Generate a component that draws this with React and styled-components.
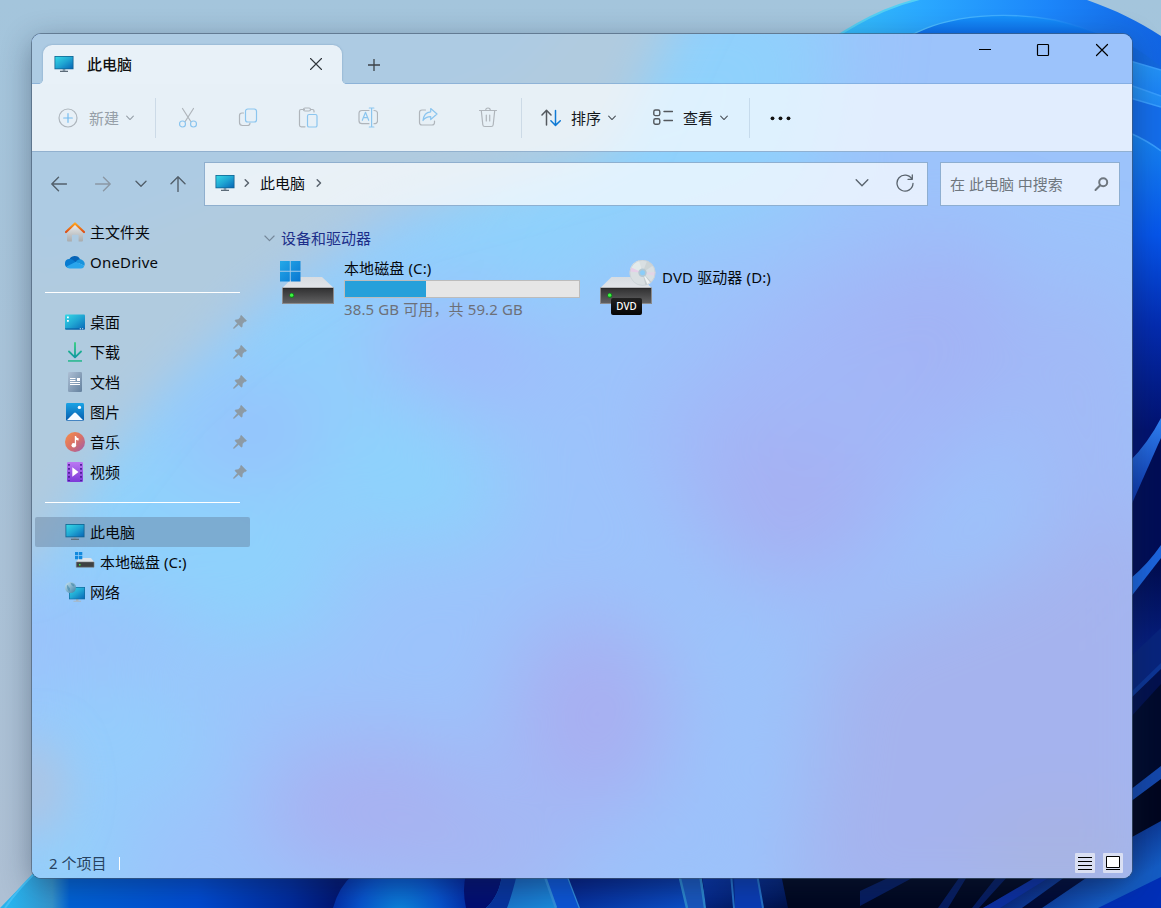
import React from "react";
import styled, { createGlobalStyle, css } from "styled-components";

const GlobalStyle = createGlobalStyle`
  * { box-sizing: border-box; }
  html, body { margin: 0; padding: 0; overflow: hidden; }
  body {
    font-family: "Noto Sans", "Noto Sans CJK SC", sans-serif;
    font-size: 15px;
    line-height: 20px;
    color: #06090d;
  }
  svg { display: block; flex: none; }
`;

const Desktop = styled.main`
  position: relative;
  width: 1161px;
  height: 908px;
  padding: 34px 29px 30px 32px;
  overflow: hidden;
  background: #a5c3d8;
`;

const WallpaperLayer = styled.div`
  position: absolute;
  inset: 0;
`;

const Window = styled.section`
  position: relative;
  display: flex;
  flex-direction: column;
  width: 1100px;
  height: 844px;
  border-radius: 9px;
  overflow: hidden;
  background: #9cc3fb;
`;

const Frame = styled.div`
  position: relative;
  width: 1100px;
  height: 844px;
  border-radius: 9px;
  box-shadow: 0 0 0 1px rgba(70, 90, 115, 0.62), 0 8px 30px rgba(20, 35, 60, 0.42);
`;

const Tint = styled.div`
  position: absolute;
  inset: 0;
`;

const TitleBar = styled.header`
  position: relative;
  display: flex;
  height: 50px;
  flex: none;
  padding-left: 11px;
  border-bottom: 1px solid rgba(110, 155, 205, 0.5);
`;

const Tab = styled.div`
  position: relative;
  display: flex;
  align-items: center;
  width: 299px;
  height: 39px;
  margin-top: 11px;
  margin-bottom: -1px;
  padding: 0 19px 1px 11px;
  border-radius: 9px 9px 0 0;
  background: #e8f1f8;
  box-shadow: 0 0 2px rgba(80, 120, 160, 0.55);
  clip-path: inset(-3px -4px 0 -4px);

  &::before,
  &::after {
    content: "";
    position: absolute;
    bottom: 0;
    width: 4px;
    height: 4px;
  }
  &::before {
    left: -4px;
    background: radial-gradient(circle at 0 0, transparent 3.5px, #e8f1f8 4px);
  }
  &::after {
    right: -4px;
    background: radial-gradient(circle at 100% 0, transparent 3.5px, #e8f1f8 4px);
  }
`;

const TabTitle = styled.span`
  flex: 1;
  margin-left: 13px;
  font-weight: 500;
  color: #111;
`;

const AddTab = styled.div`
  padding: 25px 0 0 26px;
  color: #3c4248;
`;

const Controls = styled.div`
  display: flex;
  gap: 45px;
  margin-left: auto;
  padding: 9px 23px 0 0;
  color: #000;
`;

const Toolbar = styled.div`
  position: relative;
  display: flex;
  align-items: center;
  flex: none;
  height: 68px;
  background: rgba(255, 255, 255, 0.7);
  border-bottom: 1px solid rgba(90, 135, 180, 0.6);
`;

const ToolButton = styled.div`
  display: flex;
  align-items: center;
  width: ${(p) => p.$width}px;
  padding-left: ${(p) => p.$inset}px;
  color: ${(p) => (p.$muted ? "#969fa8" : "#14181c")};
`;

const ToolLabel = styled.span`
  margin: 0 7px 0 ${(p) => p.$gap}px;
  width: 30px;
  white-space: nowrap;
`;

const IconGroup = styled.div`
  display: flex;
  padding: 0 3px 0 2px;
`;

const IconSlot = styled.div`
  display: grid;
  place-items: center;
  width: 60px;
  height: 40px;
  color: #afb5bb;
`;

const Separator = styled.div`
  width: 1px;
  height: 40px;
  background: rgba(120, 150, 180, 0.24);
`;

const NavRow = styled.div`
  position: relative;
  display: flex;
  flex: none;
  height: 65px;
  padding: 10px 12px 0 0;
`;

const NavButtons = styled.div`
  display: flex;
  align-items: center;
  width: 172px;
  height: 44px;
  padding-left: 19px;
  color: #53606c;
`;

const NavIcon = styled.div`
  display: flex;
  width: ${(p) => p.$width}px;
  margin-right: ${(p) => p.$after}px;
  color: ${(p) => (p.$muted ? "#8b98a5" : "inherit")};
`;

const field = css`
  display: flex;
  align-items: center;
  height: 44px;
  border: 1px solid rgba(96, 140, 185, 0.65);
  background: rgba(255, 255, 255, 0.72);
`;

const AddressBar = styled.div`
  ${field}
  width: 724px;
  padding: 0 13px 2px 10px;
  margin-right: 12px;
  color: #5a646e;
`;

const CrumbArrow = styled.span`
  margin-left: ${(p) => p.$before}px;
`;

const Crumb = styled.span`
  margin-left: 10px;
  color: #0b0e12;
`;

const AddressActions = styled.div`
  display: flex;
  align-items: center;
  gap: 27px;
  margin-left: auto;
`;

const SearchBox = styled.div`
  ${field}
  width: 180px;
  padding: 0 10px 0 9px;
  justify-content: space-between;
  color: #6f777f;
  white-space: nowrap;
`;

const Body = styled.div`
  position: relative;
  display: flex;
  flex: 1;
  min-height: 0;
`;

const Sidebar = styled.nav`
  width: 218px;
  padding-left: 3px;
`;

const Row = styled.div`
  display: flex;
  align-items: center;
  height: 30px;
  padding: 0 3px 0 ${(p) => (p.$nested ? 39 : 29)}px;
  border-radius: 2px;
  background: ${(p) => (p.$selected ? "rgba(98, 122, 150, 0.42)" : "transparent")};
`;

const RowIcon = styled.span`
  display: grid;
  place-items: center;
  width: 22px;
  height: 22px;
  margin-right: 4px;
`;

const RowLabel = styled.span`
  flex: 1;
  white-space: nowrap;
  letter-spacing: ${(p) => (p.$wide ? 0.2 : 0)}px;
`;

const Divider = styled.div`
  height: 30px;
  padding: 15px 10px 0;

  &::before {
    content: "";
    display: block;
    height: 1px;
    background: #fff;
  }
`;

const Content = styled.div`
  flex: 1;
  padding: 11px 0 0 14px;
`;

const GroupHeading = styled.div`
  display: flex;
  align-items: center;
  gap: 6px;
  height: 20px;
  color: #1d2f8a;
`;

const Drives = styled.div`
  display: flex;
  padding: 10px 0 0 16px;
`;

const Drive = styled.div`
  display: flex;
  width: ${(p) => p.$width}px;
`;

const DriveIcon = styled.div`
  width: ${(p) => p.$width}px;
  padding-top: 2px;
`;

const DriveInfo = styled.div`
  padding-top: ${(p) => p.$top}px;
  white-space: nowrap;
  letter-spacing: 0.12px;
`;

const DriveName = styled.div`
  height: 20px;
`;

const Meter = styled.div`
  width: 236px;
  height: 18px;
  margin-top: 2px;
  border: 1px solid #bcbcbc;
  background: #e6e6e6;
`;

const MeterFill = styled.div`
  height: 100%;
  background: #26a0da;
`;

const DriveSpace = styled.div`
  margin-top: 1px;
  color: #6d7078;
`;

const StatusBar = styled.footer`
  position: relative;
  display: flex;
  align-items: center;
  flex: none;
  height: 30px;
  padding: 0 9px 0 17px;
  color: #27425f;
`;

const StatusMark = styled.span`
  width: 1px;
  height: 13px;
  margin-left: 13px;
  background: #fff;
`;

const ViewButtons = styled.div`
  display: flex;
  gap: 8px;
  margin-left: auto;
`;

const ViewButton = styled.div`
  width: 20px;
  height: 20px;
  border-radius: 1px;
  background: rgba(238, 240, 246, 0.72);
`;

const Line = ({ size = 20, w, h, box, width = 1.2, children }) => (
  <svg
    width={w || size}
    height={h || size}
    viewBox={box || `0 0 ${w || size} ${h || size}`}
    fill="none"
    stroke="currentColor"
    strokeWidth={width}
    strokeLinecap="round"
    strokeLinejoin="round"
  >
    {children}
  </svg>
);

const Chevron = ({ w = 8, width = 1.1, color = "currentColor" }) => (
  <Line w={w} h={w} box="0 0 12 12" width={(width * 12) / w}>
    <path d="M1 3.3 6 8.3l5-5" stroke={color} />
  </Line>
);

const RightChevron = () => (
  <Line w={6} h={10} width={1.5}>
    <path d="m1.2 1.8 3.3 3.2-3.3 3.2" />
  </Line>
);

const Monitor = ({ w = 20, h = 18 }) => (
  <svg width={w} height={h} viewBox="0 0 20 18">
    <path d="M8.7 14h2.6v2H8.7z" fill="#8fa1b0" />
    <path d="M6 15.7h8v1.2H6z" fill="#5c6b78" />
    <path d="M.5 1h19v13.3H.5z" fill="#10618f" />
    <path d="M1.3 1.8h17.4v11.7H1.3z" fill="url(#screen)" />
  </svg>
);

const Home = () => (
  <svg width="20" height="20" viewBox="0 0 20 20">
    <path d="M2 8.5 10 1.8l8 6.7v10.1a1 1 0 0 1-1 1h-3.4v-5.8a1 1 0 0 0-1-1H7.9a1 1 0 0 0-1 1v5.8H3a1 1 0 0 1-1-1z" fill="url(#wall)" />
    <path d="M1 10 10 1.5 19 10" fill="none" stroke="url(#roof)" strokeWidth="2.2" strokeLinecap="round" strokeLinejoin="round" />
  </svg>
);

const Cloud = () => (
  <svg width="20" height="14" viewBox="0 0 20 14">
    <path d="M4 5.2A6 6 0 0 1 15.2 4.4L11 10 3 9z" fill="#0763b6" />
    <path d="M4.6 4.1A5 5 0 0 1 9 5.8l6 5.2-11.5 2A4.5 4.5 0 0 1 4.6 4.1z" fill="#087bd0" />
    <path d="M10.7 6.8c1.6-2.2 4-3.2 6-2.1a4.6 4.6 0 0 1 2.7 6z" fill="#1893dc" />
    <path d="M1.5 11.4 11 6.7l8.4 4a3.6 3.6 0 0 1-3.3 2.800H4.6a4 4 0 0 1-3.1-2.1z" fill="#29a5ec" />
  </svg>
);

const DesktopGlyph = () => (
  <svg width="20" height="16" viewBox="0 0 20 16">
    <rect y=".5" width="20" height="15" rx="1" fill="url(#screen)" />
    <path d="M0 14.500h20v.3q0 .7-1 .7H1q-1 0-1-.7z" fill="#07559c" />
    <path d="M2 2.500h1.800v1.800H2zM2 6h1.800v1.800H2zM14.800 14.200h1v1h-1zm2.400 0h1v1h-1z" fill="#fff" />
  </svg>
);

const Download = () => (
  <svg width="16" height="20" viewBox="0 0 16 20" fill="none" stroke="url(#green)" strokeLinecap="round" strokeLinejoin="round">
    <path d="M8.010.900 8 15M2 9.500 8 15.300l6-5.800" strokeWidth="1.800" />
    <path d="M1 18.200h14v1.500H1z" fill="#21b78b" stroke="none" />
  </svg>
);

const DocumentGlyph = () => (
  <svg width="14" height="20" viewBox="0 0 14 20">
    <rect width="14" height="20" rx="1.300" fill="url(#doc)" />
    <path d="M2 6.500h5.500M2 8.500h5.500M2 10.500h10M2 12.500h10" stroke="#fff" strokeWidth="1" />
    <path d="M9 6h3v3H9z" fill="#fff" />
  </svg>
);

const Picture = () => (
  <svg width="18" height="18" viewBox="0 0 18 18">
    <rect width="18" height="18" rx="1.400" fill="url(#photo)" />
    <path d="M.800 17.200 8 10q1-.9 2 0l7.200 7.200z" fill="#f7fbff" />
    <circle cx="13.400" cy="4.400" r="1.700" fill="#f7fbff" />
  </svg>
);

const Music = () => (
  <svg width="20" height="20" viewBox="0 0 20 20">
    <circle cx="10" cy="10" r="10" fill="url(#music)" />
    <circle cx="8.800" cy="13.300" r="2.300" fill="#fff" />
    <path d="M9.800 13.300V4h1.300c.1 1.500.9 2 2.500 2.300v2.300c-1.100-.1-2-.4-2.500-.8v5.500z" fill="#fff" />
  </svg>
);

const Video = () => (
  <svg width="16" height="20" viewBox="0 0 16 20">
    <rect width="16" height="20" rx="1.200" fill="url(#video)" />
    <path d="M2 2v17M14 2v17" stroke="#4a1d94" strokeWidth="1.800" strokeDasharray="1.800 2.200" />
    <path d="M5.300 5.300v9.400l6.200-4.700z" fill="#fff" />
  </svg>
);

const SmallDrive = () => (
  <svg width="20" height="20" viewBox="0 0 20 20">
    <path d="M4 6h12l3.500 4.500H1z" fill="#dde3e9" />
    <path d="M1.300 10h17.700v5.200H1.300z" fill="#3e4042" stroke="#77797b" strokeWidth=".6" />
    <path d="M4 12h1.500v1.500H4z" fill="#42ea45" />
    <path d="M0 0h3.300v3.300H0zm4 0h3.300v3.300H4zM0 4h3.300v3.300H0zm4 0h3.300v3.300H4z" fill="#1189dd" />
  </svg>
);

const Network = () => (
  <svg width="20" height="20" viewBox="0 0 20 20">
    <path d="M11 17h2.500v2H11zM8.500 18.800H16v.9H8.500z" fill="#a8b6c2" />
    <path d="M4 5h16v12.300H4z" fill="#126b9f" />
    <path d="M4.700 5.700h14.600v11H4.700z" fill="url(#screen)" />
    <circle cx="5.500" cy="5.500" r="5.500" fill="url(#globe)" />
    <path d="M5.500.8q3 0 4 2.500L8.500 4.500 6.500 3zM2 3q1.500 0 1.500 1.500L5 6.500 4.500 9.500Q1.500 7 2 3z" fill="#2f7ba0" opacity=".5" />
  </svg>
);

const Pin = () => (
  <svg width="14" height="14" viewBox="0 0 14 14" fill="#8d9aa4" stroke="#8d9aa4" strokeWidth=".5">
    <path d="M8.500.6 13.300 5.400q.4.700-.5 1l-1.500.4-1.900 2.100-.2 2.600q-.3 1-1.200.4L5.700 9.600 1.200 13.300.5 13.400.6 12.700 4.400 8.300 2.200 6.100q-.7-.9.4-1.200L5.200 4.600l2.100-2.100.3-1.500q.3-.9.900-.4z" />
  </svg>
);

const DriveBody = ({ x = 0, y = 0 }) => (
  <g transform={`translate(${x} ${y})`}>
    <path d="M11.500 0h28.500L52 11.300H0z" fill="url(#lid)" />
    <rect x=".5" y="11" width="51" height="15.500" fill="url(#metal)" stroke="#8b8b8d" />
    <path d="M1 11.500h50" stroke="#2a2a2b" />
    <circle cx="9.800" cy="18.500" r="2.400" fill="#0b8d18" />
    <circle cx="9.600" cy="18.200" r="1.600" fill="#40f542" />
  </g>
);

const SystemDrive = () => (
  <svg width="55" height="46" viewBox="0 0 55 46">
    <DriveBody x={2} y={17} />
    <path d="M0 1h9.800v9.800H0zm10.700 0h9.800v9.800h-9.800zM0 11.700h9.800v9.800H0zm10.700 0h9.800v9.800h-9.800z" fill="url(#win)" />
  </svg>
);

const DvdWrap = styled.div`
  position: relative;
`;

const DvdLabel = styled.span`
  position: absolute;
  left: 11px;
  top: 38px;
  width: 31px;
  height: 17px;
  border-radius: 2px;
  background: linear-gradient(#222, #050505);
  color: #fff;
  font-size: 9.8px;
  font-weight: 500;
  line-height: 17px;
  text-align: center;
`;

const DvdDrive = () => (
  <DvdWrap>
    <svg width="57" height="56" viewBox="0 0 57 56">
      <DriveBody y={17} />
      <circle cx="42.500" cy="12.800" r="12.900" fill="#d9dfe2" />
      <path d="M42.500 12.800 30 9.500A13 13 0 0 1 39 .4z" fill="#e3eaea" />
      <path d="M42.500 12.800 29.700 11.500 31.300 7.500z" fill="#e6cfe8" />
      <path d="M42.500 12.800 55.300 12 54.500 16z" fill="#e3d5e6" />
      <path d="M42.500 12.800 53 5.500A13 13 0 0 0 47 .9z" fill="#cdd4d6" />
      <path d="m42.500 12.800 3 12.500A13 13 0 0 0 51.500 22z" fill="#c3cbce" />
      <path d="m42.500 12.800 5 12A13 13 0 0 0 50.500 23z" fill="#f0f3f4" />
      <circle cx="42.500" cy="12.800" r="12.600" fill="none" stroke="#c5cdd2" strokeWidth=".7" />
      <circle cx="42.500" cy="12.800" r="4.200" fill="#b3c8d4" />
      <circle cx="42.500" cy="12.800" r="2.500" fill="#8ccdf8" />
    </svg>
    <DvdLabel>DVD</DvdLabel>
  </DvdWrap>
);

const Gradient = ({ id, from, to, mid, vertical }) => (
  <linearGradient id={id} x1="0" y1="0" x2={vertical ? 0 : 1} y2="1">
    <stop offset="0" stopColor={from} />
    {mid && <stop offset=".5" stopColor={mid} />}
    <stop offset="1" stopColor={to} />
  </linearGradient>
);

const Wallpaper = () => (
  <svg width="1161" height="908" viewBox="0 0 1161 908">
    <defs>
      <Gradient id="screen" from="#36d8e5" mid="#20a6d3" to="#0867b7" />
      <Gradient id="wall" from="#eceeef" to="#a8abad" vertical />
      <Gradient id="roof" from="#ffa21b" to="#dc4e17" vertical />
      <linearGradient id="green" x1="0" y1="0" x2="0" y2="16" gradientUnits="userSpaceOnUse">
        <stop offset="0" stopColor="#31d17c" />
        <stop offset="1" stopColor="#0d96a2" />
      </linearGradient>
      <Gradient id="doc" from="#adc0d5" to="#63809d" />
      <Gradient id="photo" from="#1aa3e5" to="#075bac" vertical />
      <Gradient id="music" from="#f69049" mid="#da7166" to="#9b5bb0" />
      <Gradient id="video" from="#ba78f2" to="#7d3ad8" vertical />
      <Gradient id="globe" from="#cbe6f2" to="#377da2" />
      <Gradient id="lid" from="#d7dce1" to="#e2e5ea" vertical />
      <Gradient id="metal" from="#303031" to="#626263" vertical />
      <Gradient id="win" from="#25a9e8" to="#0876d1" />
      <Gradient id="sky" from="#a4c5dc" to="#aec0d4" vertical />
      <linearGradient id="bloomTop" x1="830" y1="0" x2="1161" y2="40" gradientUnits="userSpaceOnUse">
        <stop offset="0" stopColor="#36c1fa" />
        <stop offset=".28" stopColor="#2aa8ff" />
        <stop offset=".65" stopColor="#1c86fa" />
        <stop offset="1" stopColor="#1265e4" />
      </linearGradient>
      <linearGradient id="inner" x1="0" y1="17" x2="0" y2="40" gradientUnits="userSpaceOnUse">
        <stop offset="0" stopColor="#1690fa" />
        <stop offset="1" stopColor="#0963e8" />
      </linearGradient>
      <linearGradient id="rim" x1="910" y1="0" x2="1100" y2="0" gradientUnits="userSpaceOnUse">
        <stop offset="0" stopColor="#50c0ff" />
        <stop offset=".6" stopColor="#3aa8ff" />
        <stop offset="1" stopColor="#1c80f5" stopOpacity="0" />
      </linearGradient>
      <Gradient id="petal" from="#2595f6" mid="#0a62f0" to="#0036c4" vertical />
      <linearGradient id="side" x1="0" y1="130" x2="0" y2="430" gradientUnits="userSpaceOnUse">
        <stop offset="0" stopColor="#1785f1" />
        <stop offset=".35" stopColor="#0655ea" />
        <stop offset=".65" stopColor="#042cb0" />
        <stop offset="1" stopColor="#021270" />
      </linearGradient>
      <linearGradient id="band" x1="0" y1="420" x2="0" y2="500" gradientUnits="userSpaceOnUse">
        <stop offset="0" stopColor="#2f7ff0" />
        <stop offset="1" stopColor="#0c36ad" />
      </linearGradient>
      <linearGradient id="deep" x1="0" y1="560" x2="0" y2="650" gradientUnits="userSpaceOnUse">
        <stop offset="0" stopColor="#010c4e" />
        <stop offset="1" stopColor="#061f80" />
      </linearGradient>
      <linearGradient id="floor" x1="0" y1="0" x2="1161" y2="0" gradientUnits="userSpaceOnUse">
        <stop offset=".01" stopColor="#28b3ed" />
        <stop offset=".045" stopColor="#3594cd" />
        <stop offset=".06" stopColor="#0062d6" />
        <stop offset=".17" stopColor="#004bd2" />
        <stop offset=".25" stopColor="#002b9d" />
        <stop offset=".29" stopColor="#001674" />
        <stop offset=".38" stopColor="#000a66" />
      </linearGradient>
      <radialGradient id="bulb" cx="400" cy="915" r="75" gradientUnits="userSpaceOnUse">
        <stop offset="0" stopColor="#0c88dc" />
        <stop offset=".55" stopColor="#0754ce" />
        <stop offset="1" stopColor="#0226a0" />
      </radialGradient>
      <Gradient id="leaf" from="#1959b6" to="#198cdd" />
      <Gradient id="ray" from="#0737b5" to="#001045" />
      <Gradient id="stem" from="#02177a" to="#0b50c8" />
      <linearGradient id="sweep" x1="1070" y1="860" x2="1100" y2="905" gradientUnits="userSpaceOnUse">
        <stop offset="0" stopColor="#0a2a80" />
        <stop offset="1" stopColor="#145cc4" />
      </linearGradient>
    </defs>
    <rect width="1161" height="908" fill="url(#sky)" />

    <path d="M828 42C870 14 900 2 934-4H1075C1110 7 1136 20 1161 36V908H1120V42z" fill="url(#bloomTop)" />
    <path d="M828 42C870 14 900 2 934-4" fill="none" stroke="#54cff4" strokeWidth="2" />
    <path d="M910 36C950 13 1010 12 1055 20Q1080 26 1104 36z" fill="url(#inner)" />
    <path d="M910 36C950 13 1010 12 1055 20Q1080 26 1104 36" fill="none" stroke="url(#rim)" strokeWidth="1.300" />
    <path d="M1124 42Q1142 51 1161 67V200h-37z" fill="#1268df" />
    <path d="M1130 61 1161 70V240h-31z" fill="url(#petal)" />
    <path d="M1130 85 1161 96V260h-31z" fill="url(#petal)" />
    <path d="M1130 98 1161 107V300h-31z" fill="#146dea" />
    <path d="M1130 133Q1148 141 1161 151V480h-31z" fill="url(#side)" />
    <path d="M1130 61 1161 70M1130 85l31 11M1130 98l31 9M1130 133q18 8 31 18" fill="none" stroke="#389eff" strokeWidth="1.500" />
    <path d="M1130 461Q1148 443 1161 418V908h-31z" fill="url(#band)" />
    <path d="M1130 508 1161 438V908h-31z" fill="#010d56" />
    <path d="M1130 579Q1148 564 1161 545V620h-31z" fill="#1c64dc" />
    <path d="M1130 598 1161 558V908h-31z" fill="url(#deep)" />
    <path d="M1130 657 1161 628V908h-31z" fill="#08247c" />
    <path d="M1130 693 1161 663V908h-31z" fill="#0d3594" />
    <path d="M1130 699 1161 669V908h-31z" fill="#03114e" />
    <path d="M1130 718 1161 684V908h-31z" fill="#010a2c" />
    <path d="M1130 790 1161 766V908h-31z" fill="#1447ab" />
    <path d="M1130 802 1161 779V908h-31z" fill="#00061f" />

    <path d="M0 908 33 874H1161v34z" fill="url(#floor)" />
    <path d="M5 908Q18 889 36 872" fill="none" stroke="#43bff5" strokeWidth="2" />
    <path d="M333 908Q339 886 354 874H485L466 908z" fill="url(#bulb)" />
    <path d="M466 908Q462 890 466 874H515L486 908z" fill="#020e72" />
    <path d="M486 908Q500 895 502 874H546L557 908z" fill="url(#leaf)" />
    <path d="M486 908Q500 895 502 874H517Q512 895 507 908z" fill="#07349f" />
    <path d="M544 874H567L580 908H556z" fill="#0c55d5" />
    <path d="m544 874 12 34M567 874l13 34" stroke="#318edd" strokeWidth="2.500" />
    <path d="M567 874H680L688 908H580z" fill="url(#stem)" />
    <path d="M678 874H700L708 908H687z" fill="#1957be" />
    <path d="m679 874 8 34M700 874l5 34" stroke="#2c87cf" strokeWidth="2.500" />
    <path d="M702 874H785L791 908H706z" fill="url(#ray)" />
    <path d="M734 874H757l6 34H735z" fill="#0a3cb5" />
    <path d="m731 874 3 34M757 874l6 34" stroke="#2471c8" strokeWidth="2" />
    <path d="M781 874H1161V908H788z" fill="#000720" />
    <path d="M860 891 892 876h24L860 906zM938 908 961 875h7l-20 33zM972 908 998 875h11L979 908z" fill="#061c60" />
    <path d="M983 908 1065 863 1132 837 1161 821V908z" fill="url(#sweep)" />
    <path d="M983 908 1036 877H1050L1000 908z" fill="#0c2fa0" />
    <path d="M1022 908 1069 874H1092L1042 908z" fill="#000a36" />
    <path d="M1098 908 1161 877V908z" fill="#002fb7" />
  </svg>
);

const Haze = () => (
  <svg width="1100" height="844" viewBox="32 34 1100 844">
    <defs>
      <filter id="soft" x="-50%" y="-50%" width="200%" height="200%">
        <feGaussianBlur stdDeviation="42" />
      </filter>
      <filter id="edge" x="-30%" y="-30%" width="160%" height="160%">
        <feGaussianBlur stdDeviation="24" />
      </filter>
    </defs>
    <rect x="32" y="34" width="1100" height="844" fill="#9cc3fb" />
    <g filter="url(#soft)">
      <path d="M560-20H840L810 200 640 250 470 390 270 610 20 660V470L170 340 420 190z" fill="#8fd1fc" />
      <ellipse cx="420" cy="490" rx="90" ry="60" fill="#8dd3fc" />
      <ellipse cx="240" cy="590" rx="110" ry="55" fill="#8ed2fc" />
      <ellipse cx="455" cy="345" rx="95" ry="50" fill="#a0b9fb" />
      <ellipse cx="250" cy="430" rx="75" ry="50" fill="#98c0fc" />
      <ellipse cx="90" cy="640" rx="100" ry="45" fill="#9bc0fb" />
      <path d="M640 420 820 270 1000 240 1020 400 900 540 780 620 690 520z" fill="#a2b8f8" />
      <ellipse cx="940" cy="330" rx="90" ry="90" fill="#a3b4f5" />
      <ellipse cx="790" cy="500" rx="80" ry="70" fill="#a6b0f2" />
      <ellipse cx="1090" cy="430" rx="60" ry="160" fill="#a2b9f6" />
      <ellipse cx="590" cy="715" rx="80" ry="100" fill="#a8aff1" />
      <ellipse cx="380" cy="810" rx="120" ry="70" fill="#a8b0f1" />
      <ellipse cx="480" cy="860" rx="110" ry="50" fill="#a6b6f2" />
      <path d="M830 640 1180 500V930H790z" fill="#a5b3ee" />
      <ellipse cx="730" cy="650" rx="70" ry="80" fill="#9cc3fa" />
      <ellipse cx="690" cy="840" rx="60" ry="60" fill="#9cc1fa" />
      <ellipse cx="110" cy="740" rx="110" ry="70" fill="#94cdfc" />
      <ellipse cx="60" cy="870" rx="65" ry="50" fill="#90d4fa" />
      <ellipse cx="1060" cy="860" rx="90" ry="45" fill="#a8b4df" />
    </g>
    <g filter="url(#edge)">
      <path d="M-30-30H700L610 155 390 215 260 300 160 390 85 490 30 570H-30z" fill="#b0cbdf" />
      <path d="M-30-30H610L520 80 260 180 20 280z" fill="#adcbe3" />
      <ellipse cx="34" cy="788" rx="28" ry="48" fill="#b0c4df" />
    </g>
  </svg>
);

const tools = [
  {
    id: "cut",
    art: (
      <>
        <path d="m4.500 1.500 8.300 13M15.500 1.500 7.200 14.500" />
        <g stroke="#8bc5ef"><circle cx="4.500" cy="17" r="3" /><circle cx="15.500" cy="17" r="3" /></g>
      </>
    ),
  },
  {
    id: "copy",
    art: (
      <>
        <path d="M5.500 6H4Q1.500 6 1.500 8.500v7Q1.500 18.500 4.500 18.500h5q2.500 0 2.500-2.500" />
        <rect x="7.500" y="2" width="11" height="13" rx="2.300" stroke="#8bc5ef" />
      </>
    ),
  },
  {
    id: "paste",
    art: (
      <>
        <path d="M6.500 2.500H3Q1.500 2.500 1.500 4v14q0 1.800 1.800 1.800H7M12.500 2.500h2q1.500 0 1.500 1.500v1" />
        <rect x="5.500" y="1" width="7" height="3" rx="1.500" />
        <rect x="9.500" y="7.500" width="9.500" height="12.500" rx="1.600" stroke="#8bc5ef" />
      </>
    ),
  },
  {
    id: "rename",
    art: (
      <>
        <path d="M11 3.500H4Q1 3.500 1 6.500v7.200q0 3 3 3h7M16 3.500q3.500 0 3.500 3v7.200q0 3-3.500 3" />
        <path d="m4.300 13.300 3.200-8 3.200 8M5.500 10.700h4M13.600 1v19M11.300 1h4.600M11.300 20h4.600" stroke="#8bc5ef" />
      </>
    ),
  },
  {
    id: "share",
    art: (
      <>
        <path d="M7.500 3H4Q1.500 3 1.500 5.500v10Q1.500 18 4 18h10q2.500 0 2.500-2.500v-1.500" />
        <path d="M12.700 1.500 19 7l-6.300 5.500V9.600C9.200 9.500 7 10.700 5 13.500 5.500 8.700 8 5.200 12.700 4.800z" stroke="#8bc5ef" />
      </>
    ),
  },
  {
    id: "delete",
    art: <path d="M1.500 3.500h17M3.300 3.700l1.500 14Q5 19.500 6.800 19.500h6.400q1.800 0 2-1.800l1.500-14M7.700 3.300q0-2.300 2.300-2.300t2.300 2.300M8.300 8v6M11.700 8v6" />,
  },
];

const places = [
  { icon: <Home />, label: "主文件夹" },
  { icon: <Cloud />, label: "OneDrive", wide: true },
];
const pinned = [
  { icon: <DesktopGlyph />, label: "桌面" },
  { icon: <Download />, label: "下载" },
  { icon: <DocumentGlyph />, label: "文档" },
  { icon: <Picture />, label: "图片" },
  { icon: <Music />, label: "音乐" },
  { icon: <Video />, label: "视频" },
];
const devices = [
  { icon: <Monitor />, label: "此电脑", selected: true },
  { icon: <SmallDrive />, label: "本地磁盘 (C:)", nested: true },
  { icon: <Network />, label: "网络" },
];

const Entry = ({ icon, label, selected, nested, wide, pin }) => (
  <Row $selected={selected} $nested={nested}>
    <RowIcon>{icon}</RowIcon>
    <RowLabel $wide={wide}>{label}</RowLabel>
    {pin && <Pin />}
  </Row>
);

export default function App() {
  const used = 34.5;
  return (
    <Desktop>
      <GlobalStyle />
      <WallpaperLayer><Wallpaper /></WallpaperLayer>
      <Frame>
        <Window>
          <Tint><Haze /></Tint>
          <TitleBar>
            <Tab>
              <Monitor />
              <TabTitle>此电脑</TabTitle>
              <Line size={14} width={1.1}><path d="m1.500 1.500 11 11m0-11-11 11" stroke="#30363c" /></Line>
            </Tab>
            <AddTab><Line size={12} width={1.3}><path d="M6 0v12M0 6h12" /></Line></AddTab>
            <Controls>
              <Line size={14} width={1}><path d="M2 6.500h12" strokeLinecap="butt" /></Line>
              <Line size={14} width={1.2}><rect x="1.500" y="1.500" width="11" height="11" rx=".8" /></Line>
              <Line size={14} width={1.2}><path d="m1.500 1.500 11 11m0-11-11 11" /></Line>
            </Controls>
          </TitleBar>

          <Toolbar>
            <ToolButton $width={123} $inset={26} $muted>
              <Line width={1.2}>
                <circle cx="10" cy="10" r="9" stroke="#aeb6bd" />
                <path d="M10 5.700v8.600M5.700 10h8.600" stroke="#76bcef" />
              </Line>
              <ToolLabel $gap={11}>新建</ToolLabel>
              <Chevron />
            </ToolButton>
            <Separator />
            <IconGroup>
              {tools.map((tool) => (
                <IconSlot key={tool.id}>
                  <Line w={20} h={21}>{tool.art}</Line>
                </IconSlot>
              ))}
            </IconGroup>
            <Separator />
            <ToolButton $width={112} $inset={19}>
              <Line width={1.5}>
                <path d="M5.500 17V2.500M1 7l4.500-4.800L10 7" stroke="#54595e" />
                <path d="M14.500 2.500V17M9.900 12.700l4.600 4.700 4.800-4.700" stroke="#0f7ad5" />
              </Line>
              <ToolLabel $gap={10}>排序</ToolLabel>
              <Chevron color="#4d545b" width={1.1} />
            </ToolButton>
            <ToolButton $width={115} $inset={19}>
              <Line width={1.4}>
                <g stroke="#53585d">
                  <rect x=".8" y="2" width="6" height="5.600" rx="1.700" />
                  <rect x=".8" y="10.700" width="6" height="5.600" rx="1.700" />
                  <path d="M11 3.500h8.500M11 12.500h8.500" />
                </g>
              </Line>
              <ToolLabel $gap={10}>查看</ToolLabel>
              <Chevron color="#4d545b" width={1.1} />
            </ToolButton>
            <Separator />
            <ToolButton $width={60} $inset={20}>
              <svg width="22" height="6" viewBox="0 0 22 6" fill="#111">
                <circle cx="2.500" cy="3.300" r="1.900" /><circle cx="10.500" cy="3.300" r="1.900" /><circle cx="18.500" cy="3.300" r="1.900" />
              </svg>
            </ToolButton>
          </Toolbar>

          <NavRow>
            <NavButtons>
              <NavIcon $width={16} $after={28}><Line size={16} width={1.4}><path d="M15.500 8H.8M7.500 1.200.8 8l6.700 6.800" /></Line></NavIcon>
              <NavIcon $width={16} $after={24} $muted><Line size={16} width={1.4}><path d="M.5 8h14.700M8.500 1.200 15.200 8l-6.700 6.800" /></Line></NavIcon>
              <NavIcon $width={12} $after={22.5}><Chevron w={12} width={1.4} /></NavIcon>
              <NavIcon $width={16} $after={0}><Line size={16} width={1.4}><path d="M8 15.500V.8M1 7.700 8 .8l7 6.900" /></Line></NavIcon>
            </NavButtons>
            <AddressBar>
              <Monitor />
              <CrumbArrow $before={9}><RightChevron /></CrumbArrow>
              <Crumb>此电脑</Crumb>
              <CrumbArrow $before={11}><RightChevron /></CrumbArrow>
              <AddressActions>
                <Chevron w={14} width={1.4} />
                <Line size={18} width={1.3}>
                  <path d="M16 5.200A8 8 0 1 0 17 9.500M16.300 1v4.300H12" />
                </Line>
              </AddressActions>
            </AddressBar>
            <SearchBox>
              在 此电脑 中搜索
              <Line size={16} width={2}><circle cx="10.200" cy="6.200" r="4" /><path d="M7.200 9.300 2.500 14" /></Line>
            </SearchBox>
          </NavRow>

          <Body>
            <Sidebar>
              {places.map((p) => <Entry key={p.label} {...p} />)}
              <Divider />
              {pinned.map((p) => <Entry key={p.label} {...p} pin />)}
              <Divider />
              {devices.map((p) => <Entry key={p.label} {...p} />)}
            </Sidebar>
            <Content>
              <GroupHeading>
                <Chevron w={11} width={1.2} color="#75889a" />
                设备和驱动器
              </GroupHeading>
              <Drives>
                <Drive $width={320}>
                  <DriveIcon $width={64}><SystemDrive /></DriveIcon>
                  <DriveInfo $top={0}>
                    <DriveName>本地磁盘 (C:)</DriveName>
                    <Meter><MeterFill style={{ width: `${used}%` }} /></Meter>
                    <DriveSpace>38.5 GB 可用，共 59.2 GB</DriveSpace>
                  </DriveInfo>
                </Drive>
                <Drive $width={180}>
                  <DriveIcon $width={62}><DvdDrive /></DriveIcon>
                  <DriveInfo $top={9}><DriveName>DVD 驱动器 (D:)</DriveName></DriveInfo>
                </Drive>
              </Drives>
            </Content>
          </Body>

          <StatusBar>
            2 个项目
            <StatusMark />
            <ViewButtons>
              <ViewButton>
                <svg width="20" height="20"><path d="M3 4.500h14M3 8.500h14M3 12.500h14M3 16.500h14" stroke="#000" /></svg>
              </ViewButton>
              <ViewButton>
                <svg width="20" height="20"><path d="M3.500 3.500h13v11h-13z" fill="#fff" stroke="#000" /><path d="M3 16.500h14" stroke="#000" /></svg>
              </ViewButton>
            </ViewButtons>
          </StatusBar>
        </Window>
      </Frame>
    </Desktop>
  );
}
